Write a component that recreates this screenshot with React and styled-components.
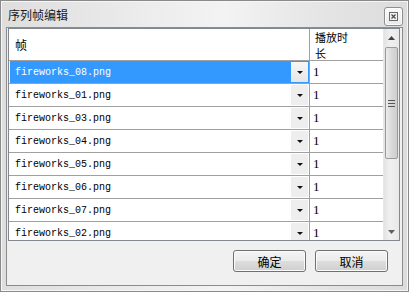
import React from "react";
import styled, { createGlobalStyle } from "styled-components";

const Global = createGlobalStyle`
  html, body { margin: 0; padding: 0; background: #fff; }
  body { width: 409px; height: 292px; overflow: hidden; }
  * { box-sizing: border-box; }
`;

const Window = styled.div`
  width: 409px;
  height: 292px;
  border: 1px solid #8a8a8a;
  background: linear-gradient(90deg, #dedede 0%, #ececec 35%, #f3f3f3 55%, #e4e4e4 80%, #dcdcdc 100%);
  padding: 0 5px 5px 5px;
  display: flex;
  flex-direction: column;
  box-shadow: inset 1px 1px 0 #f6f6f6, inset -1px -1px 0 #f6f6f6;
  font-family: "Noto Sans CJK SC", sans-serif;
`;

const TitleBar = styled.div`
  height: 26px;
  display: flex;
  align-items: center;
  justify-content: space-between;
  padding: 0 0 0 2px;
`;

const Title = styled.span`
  font-size: 12px;
  color: #1a1a1a;
  line-height: 1;
  margin-top: 1px;
`;

const CloseBtn = styled.div`
  width: 19px;
  height: 19px;
  margin-top: 4px;
  border: 1px solid #8f8f8f;
  border-radius: 3px;
  background: linear-gradient(#fafafa, #e9e9e9);
  display: flex;
  align-items: center;
  justify-content: center;
  box-shadow: inset 0 0 0 1px #fdfdfd;
`;

const Client = styled.div`
  flex: 1;
  border: 1px solid #8c8c8c;
  background: #f0f0f0;
  padding: 0 2px 0 1px;
  display: flex;
  flex-direction: column;
`;

const Table = styled.div`
  height: 213px;
  border: 1px solid #828790;
  background: #fff;
  display: flex;
  overflow: hidden;
`;

const Grid = styled.div`
  flex: 1;
  display: flex;
  flex-direction: column;
  overflow: hidden;
`;

const HeaderRow = styled.div`
  height: 32px;
  flex: none;
  display: flex;
  border-bottom: 1px solid #a0a0a0;
  background: #fff;
`;

const HeadCell = styled.div`
  width: ${(p) => p.$w}px;
  flex: none;
  display: flex;
  align-items: center;
  padding-left: ${(p) => p.$pl}px;
  font-size: 12px;
  line-height: 14px;
  color: #000;
  border-right: ${(p) => (p.$sep ? "1px solid #a0a0a0" : "none")};
`;

const HeadLines = styled.div`
  display: flex;
  flex-direction: column;
  font-size: 11px;
  line-height: 16px;
`;

const Row = styled.div`
  height: 23px;
  flex: none;
  display: flex;
  border-bottom: 1px solid #a0a0a0;
`;

const NameCell = styled.div`
  width: 300px;
  flex: none;
  display: flex;
  align-items: center;
  justify-content: space-between;
  padding: 0 1px 0 5px;
  margin-left: 1px;
  background: ${(p) => (p.$sel ? "#3399ff" : "#fff")};
  border-right: 1px solid #a0a0a0;
  font-family: "Liberation Mono", monospace;
  font-size: 10px;
  color: ${(p) => (p.$sel ? "#fff" : "#000")};
`;

const Drop = styled.div`
  width: 17px;
  height: 20px;
  display: flex;
  align-items: center;
  justify-content: center;
  background: ${(p) => (p.$sel ? "linear-gradient(#f6f6f6, #e6e6e6)" : "#eeeeee")};
`;

const Tri = styled.div`
  width: 0;
  height: 0;
  border-left: 3px solid transparent;
  border-right: 3px solid transparent;
  border-top: 3px solid #111;
`;

const ValCell = styled.div`
  flex: 1;
  display: flex;
  align-items: center;
  padding-left: 3px;
  font-family: "Liberation Serif", serif;
  font-size: 13px;
  color: #000;
`;

const ScrollBar = styled.div`
  width: 16px;
  flex: none;
  display: flex;
  flex-direction: column;
  background: linear-gradient(90deg, #e3e3e3, #f0f0f0 40%, #e8e8e8);
  border-left: 1px solid #e8e8e8;
`;

const ArrowBtn = styled.div`
  height: 17px;
  flex: none;
  display: flex;
  align-items: center;
  justify-content: center;
`;

const Track = styled.div`
  flex: 1;
  display: flex;
  flex-direction: column;
  padding: 1px 1px 0 1px;
`;

const Thumb = styled.div`
  height: 112px;
  border: 1px solid #9a9a9a;
  border-radius: 2px;
  background: linear-gradient(90deg, #ececec, #d9d9d9 50%, #cdcdcd);
  display: flex;
  align-items: center;
  justify-content: center;
`;

const Footer = styled.div`
  flex: 1;
  display: flex;
  justify-content: flex-end;
  align-items: flex-start;
  gap: 9px;
  padding: 9px 12px 0 0;
`;

const Button = styled.div`
  width: 73px;
  height: 22px;
  border: 1px solid #707070;
  border-radius: 3px;
  background: linear-gradient(#f4f4f4 0%, #ebebeb 48%, #dddddd 52%, #cfcfcf 100%);
  box-shadow: inset 0 0 0 1px #fbfbfb;
  display: flex;
  align-items: center;
  justify-content: center;
  font-size: 12px;
  color: #000;
`;

const rows = [
  "fireworks_08.png",
  "fireworks_01.png",
  "fireworks_03.png",
  "fireworks_04.png",
  "fireworks_05.png",
  "fireworks_06.png",
  "fireworks_07.png",
  "fireworks_02.png",
];

export default function App() {
  return (
    <>
      <Global />
      <Window>
        <TitleBar>
          <Title>序列帧编辑</Title>
          <CloseBtn>
            <svg width="9" height="9" viewBox="0 0 9 9">
              <rect x="0.5" y="0.5" width="8" height="8" fill="none" stroke="#6a6a6a" />
              <path d="M2.5 2.5 L6.5 6.5 M6.5 2.5 L2.5 6.5" stroke="#4a4a4a" strokeWidth="1.2" />
            </svg>
          </CloseBtn>
        </TitleBar>
        <Client>
          <Table>
            <Grid>
              <HeaderRow>
                <HeadCell $w={301} $pl={6} $sep>帧</HeadCell>
                <HeadCell $w={73} $pl={5}>
                  <HeadLines>
                    <span>播放时</span>
                    <span>长</span>
                  </HeadLines>
                </HeadCell>
              </HeaderRow>
              {rows.map((r, i) => (
                <Row key={r}>
                  <NameCell $sel={i === 0}>
                    <span>{r}</span>
                    <Drop $sel={i === 0}>
                      <Tri />
                    </Drop>
                  </NameCell>
                  <ValCell>1</ValCell>
                </Row>
              ))}
            </Grid>
            <ScrollBar>
              <ArrowBtn>
                <svg width="7" height="4" viewBox="0 0 7 4">
                  <path d="M0 4 L3.5 0 L7 4 Z" fill="#404040" />
                </svg>
              </ArrowBtn>
              <Track>
                <Thumb>
                  <svg width="7" height="7" viewBox="0 0 7 7">
                    <path d="M0 0.5 H7 M0 3.5 H7 M0 6.5 H7" stroke="#555" strokeWidth="1" />
                  </svg>
                </Thumb>
              </Track>
              <ArrowBtn>
                <svg width="7" height="4" viewBox="0 0 7 4">
                  <path d="M0 0 L7 0 L3.5 4 Z" fill="#606060" />
                </svg>
              </ArrowBtn>
            </ScrollBar>
          </Table>
          <Footer>
            <Button>确定</Button>
            <Button>取消</Button>
          </Footer>
        </Client>
      </Window>
    </>
  );
}
